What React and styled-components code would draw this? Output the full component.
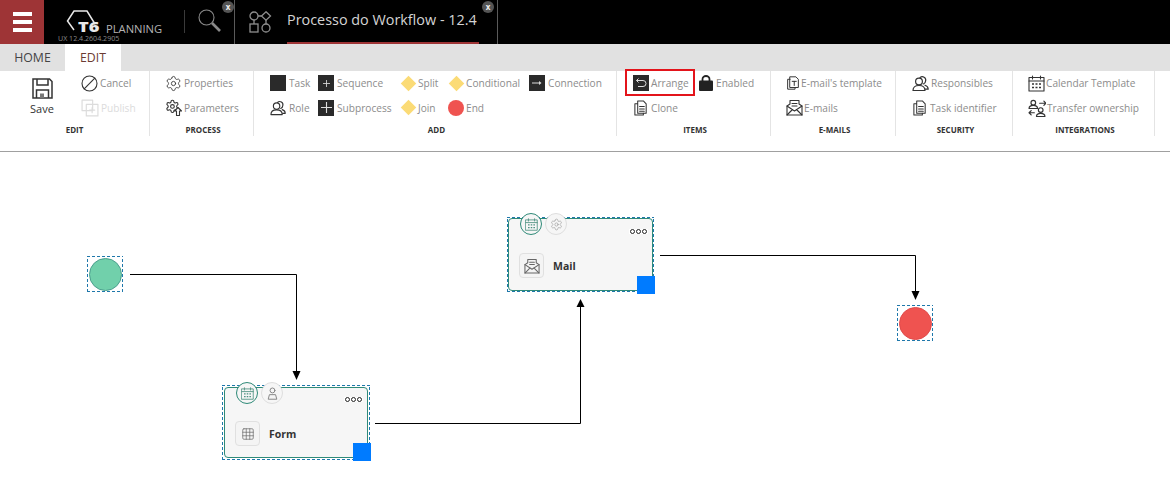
import React from 'react';
import styled, { createGlobalStyle, css } from 'styled-components';
import { Settings, Grid3x3 } from 'lucide-react';

const GlobalStyle = createGlobalStyle`
  html, body { margin: 0; padding: 0; background: #fff; overflow: hidden; }
  body { font-family: "Open Sans", "Liberation Sans", sans-serif; }
`;

const Page = styled.div`
  width: 1170px;
  height: 492px;
  display: flex;
  flex-direction: column;
  overflow: hidden;
`;

/* header */
const Header = styled.header`
  height: 44px;
  background: #000;
  display: flex;
  align-items: stretch;
  flex-shrink: 0;
`;
const MenuButton = styled.div`
  width: 44px;
  background: #9e3436;
  display: flex;
  flex-direction: column;
  justify-content: center;
  align-items: center;
  gap: 4px;
`;
const MenuBar = styled.span`
  width: 19px;
  height: 4px;
  background: #fff;
`;
const LogoArea = styled.div`
  width: 140px;
  position: relative;
`;
const LogoMark = styled.svg`
  position: absolute;
  left: 21px;
  top: 8px;
`;
const LogoT6 = styled.span`
  position: absolute;
  left: 34px;
  top: 21px;
  height: 12px;
  font: 800 14px/12px "Open Sans", sans-serif;
  color: #e8e8e8;
  transform: scaleX(1.3);
  transform-origin: left center;
`;
const LogoName = styled.span`
  position: absolute;
  left: 62px;
  top: 23px;
  font: 400 11.2px/11px "Open Sans", sans-serif;
  color: #b4b4b4;
`;
const Version = styled.span`
  position: absolute;
  left: 14px;
  top: 34px;
  font: 400 7.1px/9px "Open Sans", sans-serif;
  color: #8a8a8a;
`;
const SearchArea = styled.div`
  width: 51px;
  position: relative;
  border-right: 1px solid #5a5a5a;
  box-sizing: border-box;
  &::before {
    content: '';
    position: absolute;
    left: 0;
    top: 10px;
    height: 23px;
    width: 1px;
    background: #3a3a3a;
  }
  svg { position: absolute; left: 14px; top: 9px; }
`;
const CloseBadge = styled.span`
  position: absolute;
  right: ${(p) => p.$right}px;
  top: 1px;
  width: 12px;
  height: 12px;
  border-radius: 50%;
  background: #555;
  color: #eee;
  font: 700 8px/11px "Open Sans", sans-serif;
  text-align: center;
`;
const WorkflowTab = styled.div`
  width: 263px;
  position: relative;
  border-right: 1px solid #5a5a5a;
  box-sizing: border-box;
  svg { position: absolute; left: 14px; top: 11px; }
`;
const WorkflowTitle = styled.div`
  position: absolute;
  left: 52px;
  top: 0;
  width: 192px;
  height: 42px;
  border-bottom: 2px solid #9e3436;
  font: 400 14.4px/40px "Open Sans", sans-serif;
  color: #d4d4d4;
  white-space: nowrap;
`;

/* tabs */
const TabBar = styled.nav`
  height: 27px;
  background: #e1e1e1;
  display: flex;
  flex-shrink: 0;
`;
const Tab = styled.div`
  width: ${(p) => p.$width}px;
  background: ${(p) => (p.$active ? '#fff' : 'transparent')};
  color: ${(p) => (p.$active ? '#6b3a32' : '#444')};
  font: 400 12.3px/27px "Open Sans", sans-serif;
  text-align: center;
`;

/* ribbon */
const Ribbon = styled.div`
  height: 81px;
  box-sizing: border-box;
  border-bottom: 1px solid #a0a0a0;
  display: flex;
  align-items: flex-start;
  flex-shrink: 0;
`;
const Group = styled.section`
  width: ${(p) => p.$width}px;
  height: 65px;
  box-sizing: border-box;
  border-right: 1px solid #e4e4e4;
  display: flex;
  flex-direction: column;
  flex-shrink: 0;
`;
const GroupBody = styled.div`
  height: 48px;
  padding-left: ${(p) => p.$pad}px;
  box-sizing: border-box;
  display: grid;
  grid-template-columns: ${(p) => p.$columns || 'auto'};
  grid-auto-rows: 24.5px;
  align-items: center;
  justify-content: start;
`;
const GroupLabel = styled.div`
  margin-top: 5px;
  padding-left: ${(p) => p.$nudge ?? 3}px;
  text-align: center;
  font: 700 8px/12px "Open Sans", sans-serif;
  color: #333;
`;
const Item = styled.div`
  position: relative;
  display: flex;
  align-items: center;
  gap: ${(p) => p.$gap ?? 2}px;
  font: 400 10.15px/14px "Open Sans", sans-serif;
  color: ${(p) => (p.$disabled ? '#dcdcdc' : '#8c8c8c')};
  white-space: nowrap;
  svg { flex-shrink: 0; }
`;
const Highlight = styled.span`
  position: absolute;
  left: -8px;
  top: -6px;
  width: 70px;
  height: 27px;
  box-sizing: border-box;
  border: 2px solid #e3141b;
`;
const SaveButton = styled.div`
  grid-row: span 2;
  width: 48px;
  margin-right: 1px;
  display: flex;
  flex-direction: column;
  align-items: center;
  gap: 3px;
  padding-top: 2px;
  font: 400 11px/14px "Open Sans", sans-serif;
  color: #333;
`;
const DarkSquare = styled.span`
  width: 16px;
  height: 16px;
  background: #2a2a2a;
  color: #ddd;
  display: flex;
  align-items: center;
  justify-content: center;
  flex-shrink: 0;
`;
const Diamond = styled.span`
  width: 16px;
  height: 16px;
  display: flex;
  align-items: center;
  justify-content: center;
  flex-shrink: 0;
  &::before {
    content: '';
    width: 11px;
    height: 11px;
    background: #fbdb76;
    transform: rotate(45deg);
  }
`;
const EndDot = styled.span`
  width: 16px;
  height: 16px;
  border-radius: 50%;
  background: #ef5350;
  flex-shrink: 0;
`;

/* canvas */
const dashed = css`
  background-image:
    repeating-linear-gradient(90deg, #1f78ab 0 3px, transparent 3px 5px),
    repeating-linear-gradient(90deg, #1f78ab 0 3px, transparent 3px 5px),
    repeating-linear-gradient(0deg, #1f78ab 0 3px, transparent 3px 5px),
    repeating-linear-gradient(0deg, #1f78ab 0 3px, transparent 3px 5px);
  background-size: 100% 1px, 100% 1px, 1px 100%, 1px 100%;
  background-position: top, bottom, left, right;
  background-repeat: no-repeat;
`;
const Canvas = styled.main`
  position: relative;
  flex: 1;
  background: #fff;
`;
const Lines = styled.svg`
  position: absolute;
  left: 0;
  top: 0;
`;
const Event = styled.div`
  ${dashed}
  position: absolute;
  left: ${(p) => p.$x}px;
  top: ${(p) => p.$y}px;
  width: 36px;
  height: 36px;
  display: flex;
  align-items: center;
  justify-content: center;
`;
const EventDot = styled.span`
  width: 33px;
  height: 33px;
  box-sizing: border-box;
  border-radius: 50%;
  background: ${(p) => p.$fill};
  border: 1px solid ${(p) => p.$stroke};
`;
const Node = styled.div`
  ${dashed}
  position: absolute;
  left: ${(p) => p.$x}px;
  top: ${(p) => p.$y}px;
  width: ${(p) => (p.$tight ? 147 : 148)}px;
  height: 75px;
  box-sizing: border-box;
  padding: ${(p) => (p.$tight ? 1 : 2)}px;
`;
const NodeCard = styled.div`
  position: relative;
  height: 100%;
  box-sizing: border-box;
  background: #f6f6f6;
  border: 1px solid #2f8a78;
  border-radius: 4px;
  display: flex;
  align-items: center;
  gap: 9px;
  padding: 22px 0 0 10px;
  font: 700 10.5px/14px "Open Sans", sans-serif;
  color: #333;
`;
const NodeIconBox = styled.span`
  width: 25px;
  height: 25px;
  box-sizing: border-box;
  background: #f4f4f4;
  border: 1px solid #e0e0e0;
  border-radius: 4px;
  display: flex;
  align-items: center;
  justify-content: center;
  color: #666;
`;
const Badges = styled.div`
  position: absolute;
  left: 11px;
  top: -6px;
  display: flex;
  gap: 3px;
`;
const Badge = styled.span`
  width: 22px;
  height: 22px;
  box-sizing: border-box;
  border-radius: 50%;
  background: #f6f6f6;
  border: 1px solid ${(p) => (p.$on ? '#2f8a78' : '#dedede')};
  color: ${(p) => (p.$on ? '#4b8f80' : '#999')};
  display: flex;
  align-items: center;
  justify-content: center;
`;
const More = styled.span`
  position: absolute;
  right: 4px;
  top: ${(p) => (p.$tight ? 10 : 9)}px;
  padding: 0 1px;
  background: #fff;
  display: flex;
  gap: 1px;
`;
const MoreDot = styled.i`
  width: 5px;
  height: 5px;
  box-sizing: border-box;
  border: 1px solid #222;
  border-radius: 50%;
`;
const Handle = styled.span`
  position: absolute;
  right: ${(p) => (p.$tight ? -3 : -4)}px;
  bottom: -4px;
  width: 18px;
  height: 18px;
  background: #007bff;
`;

const Stroke = ({ size = 17, children, w = 1.1, color = '#333' }) => (
  <svg width={size} height={size} viewBox="0 0 17 17" fill="none" stroke={color} strokeWidth={w} strokeLinejoin="round" strokeLinecap="round">
    {children}
  </svg>
);

const SaveIcon = () => (
  <svg width="21" height="21" viewBox="0 0 21 21" fill="none" stroke="#333" strokeWidth="1.5">
    <path d="M1 1h16.5L20 3.5V20H1z" />
    <path d="M5 1v6h11V1M4.5 20v-8h12v8" />
    <rect x="8" y="15.5" width="4" height="4.5" fill="#777" stroke="none" />
  </svg>
);
const CancelIcon = () => (
  <Stroke>
    <circle cx="8.5" cy="8.5" r="7.5" />
    <path d="M3.2 13.8 13.8 3.2" />
  </Stroke>
);
const PublishIcon = () => (
  <Stroke size={18} color="#dcdcdc">
    <rect x="1" y="1" width="10" height="10" />
    <rect x="5" y="5" width="11" height="11" />
    <path d="M10.5 8v5M8 10.5h5" />
  </Stroke>
);
const GearUpIcon = () => (
  <Stroke>
    <g transform="scale(0.62)">
      <path d="M12.2 2h-.4a2 2 0 0 0-2 2v.2a2 2 0 0 1-1 1.7l-.4.2a2 2 0 0 1-2 0l-.2-.1a2 2 0 0 0-2.7.7l-.2.4a2 2 0 0 0 .7 2.7l.2.1a2 2 0 0 1 1 1.7v.5a2 2 0 0 1-1 1.8l-.2.1a2 2 0 0 0-.7 2.7l.2.4a2 2 0 0 0 2.7.7l.2-.1a2 2 0 0 1 2 0l.4.2a2 2 0 0 1 1 1.7v.2a2 2 0 0 0 2 2h.4a2 2 0 0 0 2-2v-.2a2 2 0 0 1 1-1.7l.4-.2a2 2 0 0 1 2 0l.2.1a2 2 0 0 0 2.7-.7l.2-.4a2 2 0 0 0-.7-2.7l-.2-.1a2 2 0 0 1-1-1.8v-.5a2 2 0 0 1 1-1.7l.2-.1a2 2 0 0 0 .7-2.7l-.2-.4a2 2 0 0 0-2.7-.7l-.2.1a2 2 0 0 1-2 0l-.4-.2a2 2 0 0 1-1-1.7V4a2 2 0 0 0-2-2z" strokeWidth="1.8" />
      <circle cx="12" cy="12" r="3" strokeWidth="1.8" />
    </g>
    <path d="M13 8.5 16.5 12h-2v4.5h-3V12h-2z" fill="#fff" />
  </Stroke>
);
const PeopleIcon = ({ size = 17 }) => (
  <Stroke size={size} w={1.2}>
    <circle cx="7" cy="6.5" r="3.4" fill="#fff" />
    <path d="M1 15.5c0-3.2 2.6-5 6-5s6 1.8 6 5z" fill="#fff" />
    <path d="M8 2.6A3.4 3.4 0 0 1 13.6 6a3.4 3.4 0 0 1-2.2 3M13 10.2c2 .6 3.2 2 3.2 4H13.4" />
  </Stroke>
);
const LockIcon = () => (
  <svg width="14" height="16" viewBox="0 0 14 16" fill="#222">
    <path d="M3.5 6V4.2a3.5 3.2 0 0 1 7 0V6" fill="none" stroke="#222" strokeWidth="1.8" />
    <rect x="0" y="5.5" width="14" height="10.5" rx="1" />
  </svg>
);
const DocIcon = () => (
  <Stroke size={16}>
    <path d="M5 1h6l3 3v10H5z" fill="#fff" />
    <path d="M4.8 4H2v12h9v-2" />
    <path d="M7 7h5M7 9.5h5M7 12h5" />
  </Stroke>
);
const TemplateIcon = () => (
  <Stroke size={14} w={1.2}>
    <path d="M5 1h7l3 3v10H5z" />
    <path d="M5 4H2v12h9v-2" />
    <path d="M7.5 6.5h5M10 6.5v5" />
  </Stroke>
);
const MailOpenIcon = ({ size = 17, color = '#333' }) => (
  <Stroke size={size} color={color}>
    <path d="M1 7 4 5V1.5h9V5l3 2v9H1z" />
    <path d="M1 7l7.5 5L16 7M1 16l5.5-5.5M16 16l-5.5-5.5" />
    <path d="M6 4.5h5M6 7h5" />
  </Stroke>
);
const CalendarIcon = ({ size = 17, color = '#333' }) => (
  <Stroke size={size} color={color}>
    <rect x="1" y="2.5" width="15" height="13.5" />
    <path d="M1 6h15M4.5 1v3M12.5 1v3" />
    <path d="M4 9h2M7.5 9h2M11 9h2M4 12.5h2M7.5 12.5h2M11 12.5h2" strokeWidth="1.6" strokeLinecap="butt" />
  </Stroke>
);
const UserBadgeIcon = () => (
  <Stroke size={13} color="#888" w={1.3}>
    <circle cx="8.5" cy="4.5" r="3.2" />
    <path d="M3 15.5 4.5 10h8l1.5 5.5z" />
  </Stroke>
);
const TransferIcon = () => (
  <Stroke size={18}>
    <circle cx="5" cy="3.5" r="2.2" />
    <path d="M1 9c0-2 1.5-3 4-3s4 1 4 3z" />
    <circle cx="12" cy="10.5" r="2.2" />
    <path d="M8 16.5c0-2 1.5-3 4-3s4 1 4 3z" />
    <path d="M11 4h6M15 2l2 2-2 2M1 13h5M3 11l-2 2 2 2" />
  </Stroke>
);
const SearchIcon = () => (
  <svg width="24" height="24" viewBox="0 0 24 24" fill="none" stroke="#8a8a8a">
    <circle cx="8.5" cy="8.5" r="7.5" strokeWidth="1.1" />
    <path d="M14 14 22 22" strokeWidth="2.6" />
  </svg>
);

const ArrangeGlyph = () => (
  <svg width="12" height="12" viewBox="0 0 12 12" fill="none" stroke="#ddd" strokeWidth="1">
    <path d="M3.5 1.5 1.5 3.5l2 2M1.5 3.5H8a2.5 2.5 0 0 1 0 6H3" />
  </svg>
);
const PlusGlyph = ({ size }) => (
  <svg width={size} height={size} viewBox="0 0 10 10" stroke="#ddd" strokeWidth={size > 9 ? 1 : 1.2}>
    <path d="M5 0v10M0 5h10" />
  </svg>
);
const ConnectionGlyph = () => (
  <svg width="10" height="6" viewBox="0 0 10 6" fill="#ddd" stroke="#ddd" strokeWidth="1">
    <path d="M0 3h7" />
    <path d="M7 1l2.5 2L7 5z" stroke="none" />
  </svg>
);
const WorkflowIcon = () => (
  <svg width="23" height="22" viewBox="0 0 23 22" fill="none" stroke="#8f8f8f" strokeWidth="1.3">
    <circle cx="5" cy="5" r="4" />
    <path d="M17 .8 21.5 5 17 9.2 12.5 5z" />
    <rect x="1" y="13" width="8" height="8" />
    <circle cx="17" cy="17" r="4" />
    <path d="M9 5h3.5M5 9v4M17 9v4" />
  </svg>
);

const Connector = ({ d }) => <path d={d} fill="none" stroke="#000" strokeWidth="1" />;

const TaskNode = ({ x, y, label, icon, second, tight }) => (
  <Node $x={x} $y={y} $tight={tight}>
    <NodeCard>
      <Badges>
        <Badge $on><CalendarIcon size={13} color="#4b8f80" /></Badge>
        <Badge>{second}</Badge>
      </Badges>
      <More $tight={tight}><MoreDot /><MoreDot /><MoreDot /></More>
      <NodeIconBox>{icon}</NodeIconBox>
      {label}
      <Handle $tight={tight} />
    </NodeCard>
  </Node>
);

export default function App() {
  return (
    <Page>
      <GlobalStyle />
      <Header>
        <MenuButton><MenuBar /><MenuBar /><MenuBar /></MenuButton>
        <LogoArea>
          <LogoMark width="32" height="26" viewBox="0 0 32 26" fill="none" stroke="#e8e8e8" strokeWidth="1.5">
            <path d="M30 16 22 3H9L2.5 13 9 22" />
          </LogoMark>
          <LogoT6>T6</LogoT6>
          <LogoName>PLANNING</LogoName>
          <Version>UX 12.4.2604.2905</Version>
        </LogoArea>
        <SearchArea>
          <SearchIcon />
          <CloseBadge $right={0}>x</CloseBadge>
        </SearchArea>
        <WorkflowTab>
          <WorkflowIcon />
          <WorkflowTitle>Processo do Workflow - 12.4</WorkflowTitle>
          <CloseBadge $right={3}>x</CloseBadge>
        </WorkflowTab>
      </Header>

      <TabBar>
        <Tab $width={65}>HOME</Tab>
        <Tab $width={56} $active>EDIT</Tab>
      </TabBar>

      <Ribbon>
        <Group $width={150}>
          <GroupBody $pad={18} $columns="63px auto">
            <SaveButton><SaveIcon />Save</SaveButton>
            <Item><CancelIcon />Cancel</Item>
            <Item $disabled><PublishIcon />Publish</Item>
          </GroupBody>
          <GroupLabel $nudge={0}>EDIT</GroupLabel>
        </Group>
        <Group $width={104}>
          <GroupBody $pad={15}>
            <Item><Settings size={17} color="#333" strokeWidth={1.2} />Properties</Item>
            <Item><GearUpIcon />Parameters</Item>
          </GroupBody>
          <GroupLabel>PROCESS</GroupLabel>
        </Group>
        <Group $width={363}>
          <GroupBody $pad={16} $columns="48px 82px 48px 81px auto">
            <Item $gap={3}><DarkSquare />Task</Item>
            <Item $gap={3}><DarkSquare><PlusGlyph size={7} /></DarkSquare>Sequence</Item>
            <Item><Diamond />Split</Item>
            <Item><Diamond />Conditional</Item>
            <Item $gap={3}><DarkSquare><ConnectionGlyph /></DarkSquare>Connection</Item>
            <Item $gap={3}><PeopleIcon size={16} />Role</Item>
            <Item $gap={3}><DarkSquare><PlusGlyph size={11} /></DarkSquare>Subprocess</Item>
            <Item><Diamond />Join</Item>
            <Item><EndDot />End</Item>
          </GroupBody>
          <GroupLabel>ADD</GroupLabel>
        </Group>
        <Group $width={154}>
          <GroupBody $pad={16} $columns="66px auto">
            <Item><DarkSquare><ArrangeGlyph /></DarkSquare>Arrange<Highlight /></Item>
            <Item $gap={3}><LockIcon />Enabled</Item>
            <Item $gap={2}><DocIcon />Clone</Item>
          </GroupBody>
          <GroupLabel>ITEMS</GroupLabel>
        </Group>
        <Group $width={125}>
          <GroupBody $pad={15}>
            <Item $gap={1}><TemplateIcon />E-mail's template</Item>
            <Item $gap={1}><MailOpenIcon />E-mails</Item>
          </GroupBody>
          <GroupLabel>E-MAILS</GroupLabel>
        </Group>
        <Group $width={117}>
          <GroupBody $pad={16}>
            <Item $gap={2}><PeopleIcon />Responsibles</Item>
            <Item $gap={2}><DocIcon />Task identifier</Item>
          </GroupBody>
          <GroupLabel>SECURITY</GroupLabel>
        </Group>
        <Group $width={142}>
          <GroupBody $pad={15}>
            <Item $gap={1}><CalendarIcon />Calendar Template</Item>
            <Item $gap={1}><TransferIcon />Transfer ownership</Item>
          </GroupBody>
          <GroupLabel>INTEGRATIONS</GroupLabel>
        </Group>
      </Ribbon>

      <Canvas>
        <Lines width="1170" height="340">
          <Connector d="M130 122.5H296.5V220" />
          <path d="M292.5 219h8l-4 9z" />
          <Connector d="M375 271.5H580.5V154" />
          <path d="M576.5 155h8l-4-8z" />
          <Connector d="M660 103.5H915.5V140" />
          <path d="M911.5 139h8l-4 9z" />
        </Lines>
        <Event $x={87} $y={104}><EventDot $fill="#71d0ab" $stroke="#4c9f8e" /></Event>
        <Event $x={897} $y={153}><EventDot $fill="#ef5350" $stroke="#e04b4b" /></Event>
        <TaskNode x={222} y={233} label="Form" icon={<Grid3x3 size={14} strokeWidth={1.2} />} second={<UserBadgeIcon />} />
        <TaskNode x={507} y={65} tight label="Mail" icon={<MailOpenIcon size={16} color="#666" />} second={<Settings size={13} strokeWidth={1.2} />} />
      </Canvas>
    </Page>
  );
}
